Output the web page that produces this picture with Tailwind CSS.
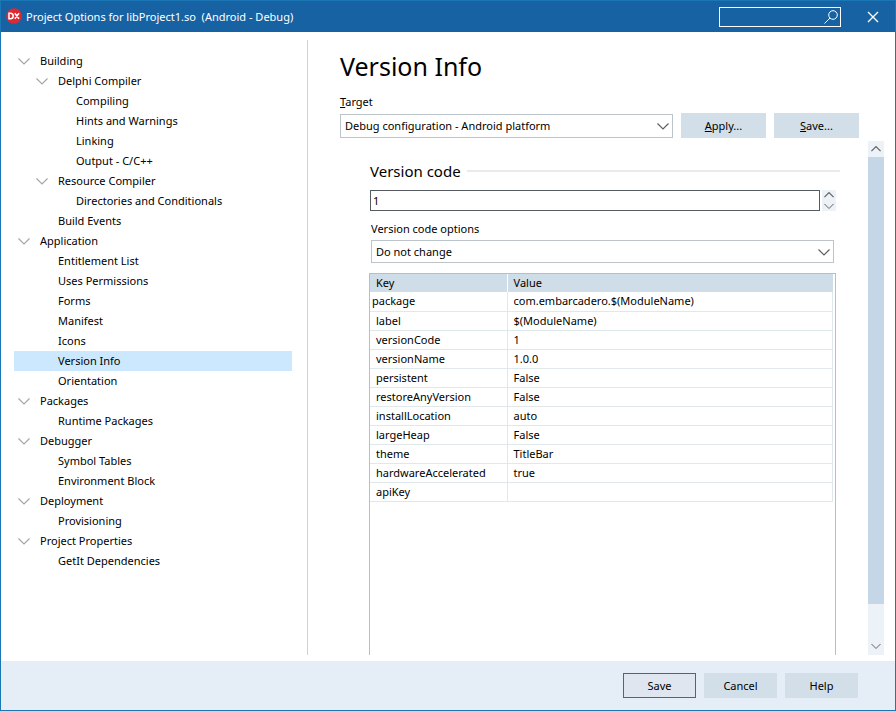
<!DOCTYPE html>
<html lang="en">
<head>
    <meta charset="UTF-8">
    <meta name="viewport" content="width=device-width, initial-scale=1.0">
    <title>Project Options for libProject1.so</title>
    <script src="https://cdn.jsdelivr.net/npm/@tailwindcss/browser@4"></script>
</head>
<body class="h-screen overflow-hidden bg-white font-['Noto_Sans','Open_Sans',sans-serif] text-[11px] leading-5 text-black">
    <!-- Shared icons -->
    <svg class="hidden">
        <symbol id="down" viewBox="0 0 12 12"><path d="M0.5 3.5 6 9l5.5-5.5" fill="none" stroke="currentColor" stroke-width="1.2"/></symbol>
        <symbol id="up" viewBox="0 0 12 12"><path d="M0.5 8.5 6 3l5.5 5.5" fill="none" stroke="currentColor" stroke-width="1.4"/></symbol>
    </svg>

    <div class="flex h-full flex-col border border-t-0 border-[#1a76b5]">
        <!-- Title bar -->
        <header class="flex h-8 shrink-0 items-center border-t border-[#1a76b5] bg-[#1762a3] pr-4 pl-[5px] text-white">
            <svg class="mr-1 mb-0.5 size-4" viewBox="0 0 16 16">
                <circle cx="8" cy="8" r="7.8" fill="#dc2a35"/>
                <path d="M3 5.200v5.600h1.400a2.800 2.800 0 0 0 0-5.600zM8.800 5.200l4.200 5.600M13 5.200l-4.200 5.600" fill="none" stroke="#fff" stroke-width="1.500"/>
            </svg>
            <h1 class="whitespace-pre">Project Options for libProject1.so  (Android - Debug)</h1>
            <label class="ml-auto flex h-5 w-[122px] items-center border border-white pr-0.5">
                <input type="search" aria-label="Search options" class="min-w-0 flex-1 bg-transparent px-1 outline-none">
                <svg class="size-3.5" viewBox="0 0 14 14" fill="none" stroke="currentColor"><circle cx="9" cy="5" r="4.300"/><path d="M6 8 .5 13.500"/></svg>
            </label>
            <button type="button" aria-label="Close" class="ml-[26px]">
                <svg class="size-3" viewBox="0 0 12 12" fill="none" stroke="currentColor" stroke-width="1.400"><path d="m1 1 10 10M11 1 1 11"/></svg>
            </button>
        </header>

        <div class="flex min-h-0 flex-1">
            <!-- Options tree -->
            <nav class="my-2 mb-1.5 w-[307px] shrink-0 border-r border-[#c5d5dd] pt-[11px] pr-[15px] pl-[13px]">
                <ul>
                    <li>
                        <div class="flex items-center pl-1"><svg class="mr-2.5 size-3 text-[#a6a6a6]"><use href="#down"/></svg>Building</div>
                        <ul>
                            <li>
                                <div class="flex items-center pl-[22px]"><svg class="mr-2.5 size-3 text-[#a6a6a6]"><use href="#down"/></svg>Delphi Compiler</div>
                                <ul>
                                    <li><a href="#" class="block pl-[62px]">Compiling</a></li>
                                    <li><a href="#" class="block pl-[62px]">Hints and Warnings</a></li>
                                    <li><a href="#" class="block pl-[62px]">Linking</a></li>
                                    <li><a href="#" class="block pl-[62px]">Output - C/C++</a></li>
                                </ul>
                            </li>
                            <li>
                                <div class="flex items-center pl-[22px]"><svg class="mr-2.5 size-3 text-[#a6a6a6]"><use href="#down"/></svg>Resource Compiler</div>
                                <ul>
                                    <li><a href="#" class="block pl-[62px]">Directories and Conditionals</a></li>
                                </ul>
                            </li>
                            <li><a href="#" class="block pl-11">Build Events</a></li>
                        </ul>
                    </li>
                    <li>
                        <div class="flex items-center pl-1"><svg class="mr-2.5 size-3 text-[#a6a6a6]"><use href="#down"/></svg>Application</div>
                        <ul>
                            <li><a href="#" class="block pl-11">Entitlement List</a></li>
                            <li><a href="#" class="block pl-11">Uses Permissions</a></li>
                            <li><a href="#" class="block pl-11">Forms</a></li>
                            <li><a href="#" class="block pl-11">Manifest</a></li>
                            <li><a href="#" class="block pl-11">Icons</a></li>
                            <li><a href="#" aria-current="page" class="block bg-[#cce8ff] pl-11">Version Info</a></li>
                            <li><a href="#" class="block pl-11">Orientation</a></li>
                        </ul>
                    </li>
                    <li>
                        <div class="flex items-center pl-1"><svg class="mr-2.5 size-3 text-[#a6a6a6]"><use href="#down"/></svg>Packages</div>
                        <ul>
                            <li><a href="#" class="block pl-11">Runtime Packages</a></li>
                        </ul>
                    </li>
                    <li>
                        <div class="flex items-center pl-1"><svg class="mr-2.5 size-3 text-[#a6a6a6]"><use href="#down"/></svg>Debugger</div>
                        <ul>
                            <li><a href="#" class="block pl-11">Symbol Tables</a></li>
                            <li><a href="#" class="block pl-11">Environment Block</a></li>
                        </ul>
                    </li>
                    <li>
                        <div class="flex items-center pl-1"><svg class="mr-2.5 size-3 text-[#a6a6a6]"><use href="#down"/></svg>Deployment</div>
                        <ul>
                            <li><a href="#" class="block pl-11">Provisioning</a></li>
                        </ul>
                    </li>
                    <li>
                        <div class="flex items-center pl-1"><svg class="mr-2.5 size-3 text-[#a6a6a6]"><use href="#down"/></svg>Project Properties</div>
                        <ul>
                            <li><a href="#" class="block pl-11">GetIt Dependencies</a></li>
                        </ul>
                    </li>
                </ul>
            </nav>

            <!-- Version Info page -->
            <main class="flex min-w-0 flex-1 flex-col pr-[11px] pb-1.5 pl-8">
                <h2 class="mt-4 text-[25px] leading-9">Version Info</h2>
                <label for="target" class="mt-2"><u>T</u>arget</label>
                <div class="mt-px mr-[25px] flex gap-2">
                    <div class="mt-px grid flex-1 items-center">
                        <select id="target" class="col-start-1 row-start-1 h-6 w-full appearance-none border border-[#bcc5cb] pl-1">
                            <option>Debug configuration - Android platform</option>
                        </select>
                        <svg class="pointer-events-none col-start-1 row-start-1 mr-1 size-3 justify-self-end text-[#606060]"><use href="#down"/></svg>
                    </div>
                    <button type="button" class="h-[25px] w-[85px] bg-[#d2dfe9]"><u>A</u>pply...</button>
                    <button type="button" class="h-[25px] w-[85px] bg-[#d2dfe9]"><u>S</u>ave...</button>
                </div>

                <div class="mt-[3px] flex min-h-0 flex-1">
                    <form class="flex min-w-0 flex-1 flex-col pr-[34px] pl-[30px]">
                        <h3 class="mt-5 -mr-1.5 flex items-center gap-1.5 text-[15px] leading-5 after:h-0.5 after:flex-1 after:bg-[#e6ebec]">Version code</h3>
                        <div class="mt-[9px] flex gap-0.5">
                            <input type="text" aria-label="Version code" value="1" class="h-[21px] min-w-0 flex-1 border border-[#555b60] px-0.5 outline-none">
                            <div class="-mr-0.5 flex w-3.5 flex-col text-[#606060]">
                                <button type="button" aria-label="Increase" class="flex flex-1 items-center justify-center bg-[#edf2f8]"><svg class="size-2.5"><use href="#up"/></svg></button>
                                <button type="button" aria-label="Decrease" class="flex flex-1 items-center justify-center bg-[#edf2f8]"><svg class="size-2.5"><use href="#down"/></svg></button>
                            </div>
                        </div>
                        <label for="code-options" class="mt-2 pl-px">Version code options</label>
                        <div class="mt-px ml-px grid items-center">
                            <select id="code-options" class="col-start-1 row-start-1 h-[23px] w-full appearance-none border border-[#bcc5cb] pl-1">
                                <option>Do not change</option>
                            </select>
                            <svg class="pointer-events-none col-start-1 row-start-1 mr-1 size-3 justify-self-end text-[#606060]"><use href="#down"/></svg>
                        </div>

                        <div class="mt-2.5 -mr-0.5 -ml-px min-h-0 flex-1 border border-b-0 border-[#b4bfc8] pr-0.5">
                            <table class="w-full table-fixed text-left leading-[18px]">
                                <thead>
                                    <tr class="bg-[#cfdde8]">
                                        <th class="w-[137px] border-r border-white pl-1.5 font-normal">Key</th>
                                        <th class="pl-1.5 font-normal">Value</th>
                                    </tr>
                                </thead>
                                <tbody class="[&_td]:h-[19px] [&_td]:border-r [&_td]:border-b [&_td]:border-[#dfe8ea] [&_td]:pl-1.5">
                                    <tr><td><span class="-ml-1">package</span></td><td>com.embarcadero.$(ModuleName)</td></tr>
                                    <tr><td>label</td><td>$(ModuleName)</td></tr>
                                    <tr><td>versionCode</td><td>1</td></tr>
                                    <tr><td>versionName</td><td>1.0.0</td></tr>
                                    <tr><td>persistent</td><td>False</td></tr>
                                    <tr><td>restoreAnyVersion</td><td>False</td></tr>
                                    <tr><td>installLocation</td><td>auto</td></tr>
                                    <tr><td>largeHeap</td><td>False</td></tr>
                                    <tr><td>theme</td><td>TitleBar</td></tr>
                                    <tr><td>hardwareAccelerated</td><td>true</td></tr>
                                    <tr><td>apiKey</td><td></td></tr>
                                </tbody>
                            </table>
                        </div>
                    </form>

                    <!-- Scroll bar -->
                    <div class="flex w-4 flex-col items-center bg-[#edf2f8] text-[#606060]">
                        <svg class="my-[3px] size-2.5 shrink-0"><use href="#up"/></svg>
                        <div class="w-full flex-12 bg-[#c5d6e7]"></div>
                        <div class="w-full flex-1"></div>
                        <svg class="mb-1 size-2.5 shrink-0"><use href="#down"/></svg>
                    </div>
                </div>
            </main>
        </div>

        <!-- Dialog buttons -->
        <footer class="flex h-[49px] shrink-0 items-center justify-end gap-2 bg-[#e5eef6] pr-[37px]">
            <button type="button" class="h-[25px] w-[73px] border border-[#1a76ad] bg-[#dfe6ef]">Save</button>
            <button type="button" class="h-[25px] w-[73px] bg-[#d2dfe9]">Cancel</button>
            <button type="button" class="h-[25px] w-[73px] bg-[#d2dfe9]">Help</button>
        </footer>
    </div>
</body>
</html>
